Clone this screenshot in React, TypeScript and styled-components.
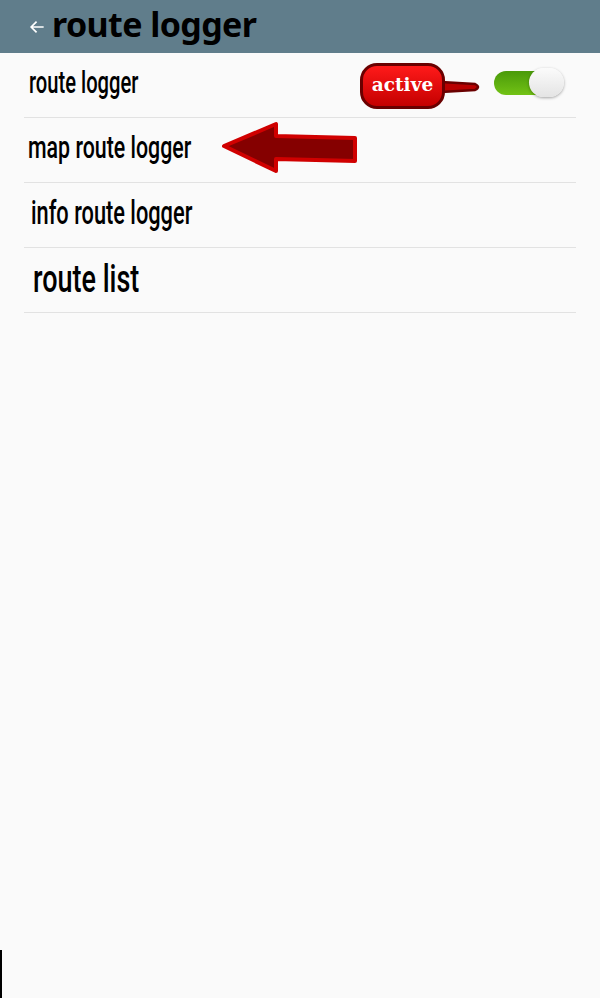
import React, { useState } from "react";
import styled, { createGlobalStyle } from "styled-components";

const Global = createGlobalStyle`
  html, body {
    margin: 0;
    padding: 0;
    background: #fafafa;
  }
  #root {
    min-height: 998px;
  }
`;

const Page = styled.div`
  min-height: 998px;
  background: #fafafa;
  position: relative;
`;

const Header = styled.div`
  height: 53px;
  background: #607d8b;
  display: flex;
  align-items: center;
  padding-left: 27px;
  gap: 5px;
`;

const Title = styled.div`
  font-family: "Noto Sans", "Open Sans", sans-serif;
  font-weight: bold;
  font-size: 34px;
  color: #000;
  margin-top: -5px;
  letter-spacing: -0.6px;
`;

const List = styled.div`
  padding: 0 24px;
`;

const Row = styled.div<{ $indent: number }>`
  height: 64px;
  border-bottom: 1px solid #e2e2e2;
  display: flex;
  align-items: center;
  position: relative;
  padding-left: ${(p) => p.$indent}px;
  font-family: Roboto, "Liberation Sans", sans-serif;
  font-weight: 500;
  color: #000;
`;

const Label = styled.span<{ $size: number; $scale: number }>`
  display: inline-block;
  font-size: ${(p) => p.$size}px;
  transform: scaleX(${(p) => p.$scale});
  transform-origin: left center;
  white-space: nowrap;
  margin-top: ${(p) => (p.$size > 34 ? -2 : -6)}px;
`;

const RightGroup = styled.div`
  margin-left: auto;
  display: flex;
  align-items: center;
  margin-right: 16px;
  margin-top: -6px;
`;

const Callout = styled.div`
  display: flex;
  align-items: center;
  margin-right: 11px;
  margin-top: 8px;
`;

const Badge = styled.div`
  width: 85px;
  height: 46px;
  border-radius: 17px;
  background: linear-gradient(#ff1a1a, #c40000);
  border: 3px solid #6a0000;
  box-sizing: border-box;
  display: flex;
  align-items: center;
  justify-content: center;
  font-family: "DejaVu Serif", "Liberation Serif", serif;
  font-weight: bold;
  font-size: 18.5px;
  color: #fff;
  padding-bottom: 3px;
  position: relative;
  z-index: 1;
`;

const Tail = styled.svg`
  margin-left: -4px;
  margin-top: 2px;
`;

const Switch = styled.button<{ $on: boolean }>`
  position: relative;
  width: 66px;
  height: 24px;
  border: none;
  padding: 0;
  border-radius: 12px;
  background: ${(p) =>
    p.$on ? "linear-gradient(#4a9a0a, #72c215)" : "#bdbdbd"};
  cursor: pointer;
  margin-top: 2px;
`;

const Thumb = styled.div<{ $on: boolean }>`
  position: absolute;
  top: -3px;
  left: ${(p) => (p.$on ? 35 : -1)}px;
  width: 35px;
  height: 29px;
  border-radius: 15px;
  background: linear-gradient(#fbfbfb, #e4e4e4);
  box-shadow: 0 1px 3px rgba(0, 0, 0, 0.35);
`;

const BigArrow = styled.svg`
  position: absolute;
  left: 197px;
  top: 3px;
`;

const EdgeMark = styled.div`
  position: absolute;
  left: 0;
  bottom: 0;
  width: 2px;
  height: 48px;
  background: #000;
`;

export default function App() {
  const [on, setOn] = useState(true);
  return (
    <Page>
      <Global />
      <Header>
        <svg width="20" height="20" viewBox="0 0 24 24">
          <path
            d="M20 12H5M11.5 5.5L5 12l6.5 6.5"
            fill="none"
            stroke="#fff"
            strokeWidth="2"
          />
        </svg>
        <Title>route logger</Title>
      </Header>
      <List>
        <Row $indent={5}>
          <Label $size={32} $scale={0.63}>route logger</Label>
          <RightGroup>
            <Callout>
              <Badge>active</Badge>
              <Tail width="42" height="14" viewBox="0 0 42 14">
                <path
                  d="M0 2 L34 4 Q40 7 34 10 L0 12 Z"
                  fill="#b80000"
                  stroke="#6a0000"
                  strokeWidth="2.5"
                />
              </Tail>
            </Callout>
            <Switch $on={on} onClick={() => setOn(!on)}>
              <Thumb $on={on} />
            </Switch>
          </RightGroup>
        </Row>
        <Row $indent={4}>
          <Label $size={32} $scale={0.667}>map route logger</Label>
          <BigArrow width="142" height="54" viewBox="0 0 142 54">
            <path
              d="M3 25 L55 3 L55 15 L134 17 L134 40 L55 38 L55 50 Z"
              fill="#850000"
              stroke="#d00000"
              strokeWidth="4"
              strokeLinejoin="round"
            />
          </BigArrow>
        </Row>
        <Row $indent={7}>
          <Label $size={33} $scale={0.66}>info route logger</Label>
        </Row>
        <Row $indent={9}>
          <Label $size={38} $scale={0.71}>route list</Label>
        </Row>
      </List>
      <EdgeMark />
    </Page>
  );
}
